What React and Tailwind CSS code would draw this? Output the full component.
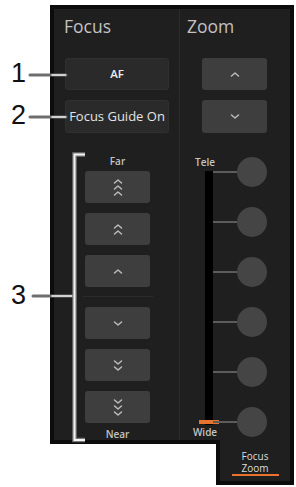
import React from 'react'

const font = { fontFamily: '"Open Sans", "Noto Sans", sans-serif' }

function Chevrons({ count = 1, down = false }) {
  const h = 5 + (count - 1) * 6
  return (
    <svg width="10" height={h} viewBox={`0 0 10 ${h}`} className="block">
      {Array.from({ length: count }).map((_, i) => {
        const y = i * 6
        const d = down
          ? `M1.5 ${y + 1} L5 ${y + 4} L8.5 ${y + 1}`
          : `M1.5 ${y + 4} L5 ${y + 1} L8.5 ${y + 4}`
        return <path key={i} d={d} fill="none" stroke="#bdbdbd" strokeWidth="1.5" strokeLinecap="round" strokeLinejoin="round" />
      })}
    </svg>
  )
}

function StepButton({ count, down }) {
  return (
    <div className="w-[65px] h-[32px] rounded-[3px] bg-[#3e3e3e] flex items-center justify-center">
      <Chevrons count={count} down={down} />
    </div>
  )
}

function Label({ children }) {
  return <div className="text-[10px] leading-[14px] font-semibold text-[#c4c4c4] whitespace-nowrap">{children}</div>
}

function Callouts() {
  return (
    <div className="absolute inset-0 pointer-events-none">
      <svg width="296" height="487" className="absolute left-0 top-0">
        <path d="M30 75 H66 M30 117 H66 M33 296 H74" stroke="#6e6e6e" strokeWidth="3" strokeLinecap="round" fill="none" />
        <path d="M52 75 H65.5 M52 117 H65.5 M52 296 H74" stroke="#f2f2f2" strokeWidth="1.4" strokeLinecap="round" fill="none" />
        <path d="M85 154.5 H74.5 V440 H85" stroke="#777" strokeWidth="4.5" fill="none" />
        <path d="M85 154.5 H74.5 V440 H85" stroke="#f4f4f4" strokeWidth="2" fill="none" />
      </svg>
      <div className="absolute left-0 top-[60px] w-[26px] text-right text-[27px] leading-[27px] text-[#111]" style={{ fontFamily: '"Liberation Sans", Arial, sans-serif' }}>1</div>
      <div className="absolute left-0 top-[102px] w-[26px] text-right text-[27px] leading-[27px] text-[#111]" style={{ fontFamily: '"Liberation Sans", Arial, sans-serif' }}>2</div>
      <div className="absolute left-0 top-[282px] w-[26px] text-right text-[27px] leading-[27px] text-[#111]" style={{ fontFamily: '"Liberation Sans", Arial, sans-serif' }}>3</div>
    </div>
  )
}

export default function App() {
  return (
    <div className="relative w-[296px] h-[487px] overflow-hidden bg-white pt-[5px] pl-[50px]" style={font}>
      <div className="w-[244px] h-[439px] border-4 border-[#0c0c0c] bg-[#1f1f1f] flex">
        {/* Focus column */}
        <div className="w-[126px] border-r border-[#2b2b2b] flex flex-col">
          <div className="mt-[5px] pl-[10px] text-[17.5px] leading-[24px] text-[#c2c2c2]">Focus</div>
          <div className="mt-[20px] ml-[11px] w-[104px] h-[32px] rounded-[3px] bg-[#2a2a2a] border border-[#303030] flex items-center justify-center text-[11.5px] font-semibold text-[#ececec]">AF</div>
          <div className="mt-[10px] ml-[11px] w-[104px] h-[33px] rounded-[3px] bg-[#2a2a2a] border border-[#303030] flex items-center justify-center text-[13px] text-[#e4e4e4] whitespace-nowrap">Focus Guide On</div>
          <div className="ml-[31px] w-[65px] flex flex-col items-center">
            <div className="mt-[21px]"><Label>Far</Label></div>
            <div className="mt-[3px] flex flex-col gap-[10px]">
              <StepButton count={3} />
              <StepButton count={2} />
              <StepButton count={1} />
            </div>
            <div className="mt-[9px] mb-[10px] w-[70px] h-px bg-[#2b2b2b]" />
            <div className="flex flex-col gap-[10px]">
              <StepButton count={1} down />
              <StepButton count={2} down />
              <StepButton count={3} down />
            </div>
            <div className="mt-[5px] text-[10px] leading-[12px] font-semibold text-[#c4c4c4]">Near</div>
          </div>
        </div>

        {/* Zoom column */}
        <div className="flex-1 flex flex-col">
          <div className="mt-[5px] pl-[7px] text-[17.5px] leading-[24px] text-[#c2c2c2]">Zoom</div>
          <div className="mt-[20px] ml-[22px] flex flex-col gap-[10px]">
            <div className="w-[65px] h-[32px] rounded-[3px] bg-[#3e3e3e] flex items-center justify-center"><Chevrons /></div>
            <div className="w-[65px] h-[33px] rounded-[3px] bg-[#3e3e3e] flex items-center justify-center"><Chevrons down /></div>
          </div>
          <div className="mt-[22px] ml-[17px] flex items-start">
            <div className="w-[16px] flex flex-col">
              <div className="flex justify-center"><Label>Tele</Label></div>
              <div className="mt-[2px] ml-[8px] w-[8px] h-[254px] bg-black flex flex-col justify-end pb-[1px]">
                <div className="-ml-[6px] w-[20px] h-[4px] shrink-0 bg-[#e8732c]" />
              </div>
              <div className="flex justify-center"><Label>Wide</Label></div>
            </div>
            <div className="mt-[2px] flex flex-col gap-[20px]">
              {[0, 1, 2, 3, 4, 5].map((i) => (
                <div key={i} className="flex items-center">
                  <div className="w-[24px] h-[2px] bg-[#5c5c5c]" />
                  <div className="w-[30px] h-[30px] rounded-full bg-[#454545]" />
                </div>
              ))}
            </div>
          </div>
        </div>
      </div>

      {/* Focus / Zoom tab */}
      <div className="relative z-10 -mt-[4px] ml-[166px] w-[78px] h-[45px] bg-[#1f1f1f] border-x-4 border-b-4 border-[#0c0c0c] flex flex-col items-center pt-[10px]">
        <div className="text-[10px] leading-[12px] text-[#dcdcdc]">Focus</div>
        <div className="text-[10px] leading-[12px] text-[#dcdcdc]">Zoom</div>
        <div className="w-[47px] h-[2px] bg-[#e8732c]" />
      </div>

      <Callouts />
    </div>
  )
}
